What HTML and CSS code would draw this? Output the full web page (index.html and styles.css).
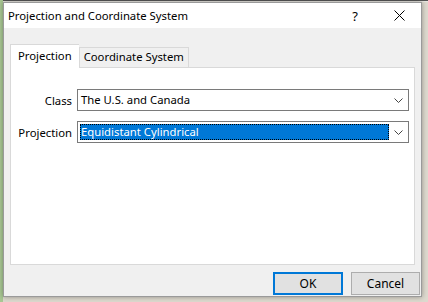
FILE: index.html
```html
<!DOCTYPE html>
<html lang="en">
<head>
	<meta charset="UTF-8">
	<title>Projection and Coordinate System</title>
	<link rel="stylesheet" href="styles.css">
</head>
<body>
	<div class="desk">
		<div class="dialog">
			<div class="titlebar">
				<span class="title">Projection and Coordinate System</span>
				<span class="help">?</span>
				<span class="close">
					<svg width="11" height="11" viewBox="0 0 11 11"><path d="M0.5 0.5L10.5 10.5M10.5 0.5L0.5 10.5" stroke="#000" stroke-width="1" fill="none"/></svg>
				</span>
			</div>
			<div class="content">
				<div class="tabs">
					<span class="tab active">Projection</span>
					<span class="tab">Coordinate System</span>
				</div>
				<div class="panel">
					<div class="form">
						<label>Class</label>
						<div class="combo">
							<span class="value">The U.S. and Canada</span>
							<span class="arrow"><svg width="9" height="5" viewBox="0 0 9 5"><path d="M0.5 0.5L4.5 4.5L8.5 0.5" stroke="#444" fill="none"/></svg></span>
						</div>
						<label>Projection</label>
						<div class="combo">
							<span class="value selected">Equidistant Cylindrical</span>
							<span class="arrow"><svg width="9" height="5" viewBox="0 0 9 5"><path d="M0.5 0.5L4.5 4.5L8.5 0.5" stroke="#444" fill="none"/></svg></span>
						</div>
					</div>
				</div>
				<div class="buttons">
					<button class="btn default">OK</button>
					<button class="btn">Cancel</button>
				</div>
			</div>
		</div>
	</div>
</body>
</html>
```

FILE: styles.css
```css
* {margin: 0;padding: 0;box-sizing: border-box;}
body {width: 428px;height: 302px;overflow: hidden;background: #ddd9ce;font-family: "Noto Sans", "Open Sans", sans-serif;font-size: 11.3px;color: #000;}
.desk {height: 302px;padding: 2px 0 0 3px;background: linear-gradient(to right, #a9c894 0, #a9c894 3px, transparent 3px), linear-gradient(to bottom, #555 0, #555 1px, #e8e6e0 1px, #e8e6e0 2px, transparent 2px);}
.dialog {width: 419px;height: 295px;background: #f0f0f0;border: 1px solid #9a9a9a;display: flex;flex-direction: column;box-shadow: 0 0 5px rgba(0, 0, 0, .35);}
.titlebar {display: flex;align-items: center;height: 25px;background: #fff;padding-left: 4px;}
.title {flex: 1;}
.help {width: 20px;font-size: 13px;text-align: center;margin-right: 29px;}
.close {display: flex;width: 11px;margin-right: 16px;}
.content {flex: 1;display: flex;flex-direction: column;padding: 16px 5px 0 6px;}
.tabs {display: flex;align-items: flex-end;height: 23px;position: relative;z-index: 1;}
.tab {height: 20px;padding: 0 4px;line-height: 18px;border: 1px solid #d9d9d9;border-bottom: none;background: #f0f0f0;}
.tab.active {height: 24px;margin-bottom: -1px;padding: 2px 7px 0 7px;background: #fff;border-right: none;}
.panel {height: 198px;margin-right: 1px;background: #fff;border: 1px solid #d9d9d9;}
.form {display: grid;grid-template-columns: 61px 1fr;column-gap: 5px;row-gap: 10px;padding: 21px 5px 0 0;align-items: center;}
.form label {text-align: right;}
.combo {display: flex;align-items: center;height: 22px;border: 1px solid #7a7a7a;background: #fff;padding-left: 2px;}
.combo .value {flex: 1;height: 16px;line-height: 15px;padding-left: 1px;}
.combo .value.selected {background: #0078d7;color: #fff;outline: 1px dotted #000;outline-offset: -1px;}
.combo .arrow {display: flex;justify-content: center;width: 19px;}
.buttons {display: flex;justify-content: flex-end;gap: 8px;padding: 7px 0 0 0;margin-right: -4px;}
.btn {width: 69px;height: 23px;font-family: inherit;font-size: 12px;background: #e1e1e1;border: 1px solid #adadad;}
.btn.default {width: 70px;border: 2px solid #0078d7;}
```
